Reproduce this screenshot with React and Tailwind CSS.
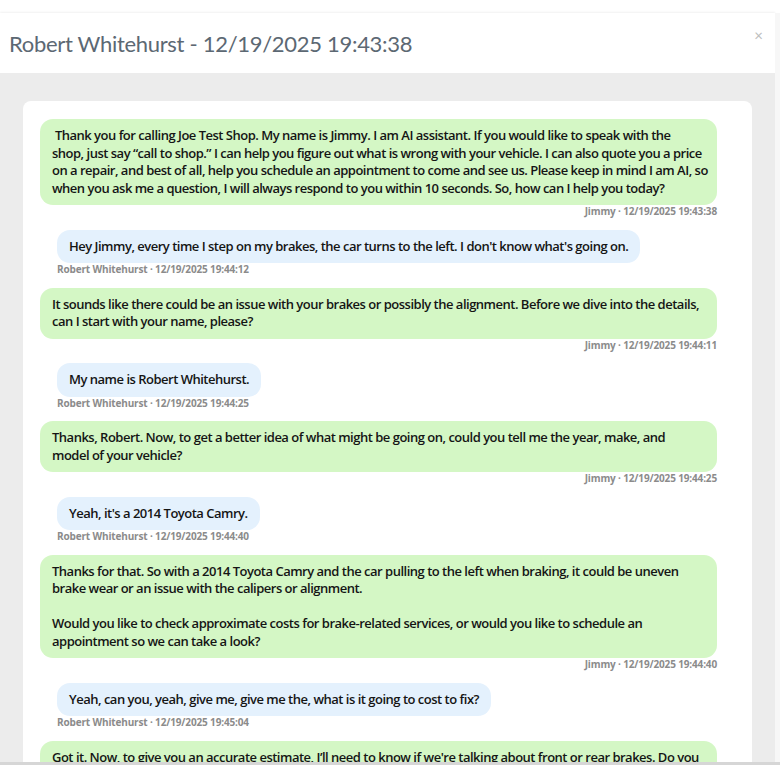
import React from 'react';

// line breaks kept as they appear in the transcript view
const MESSAGES = [
  { from: 'Jimmy', time: '12/19/2025 19:43:38', text: ' Thank you for calling Joe Test Shop. My name is Jimmy. I am AI assistant. If you would like to speak with the\nshop, just say \u201ccall to shop.\u201d I can help you figure out what is wrong with your vehicle. I can also quote you a price\non a repair, and best of all, help you schedule an appointment to come and see us. Please keep in mind I am AI, so\nwhen you ask me a question, I will always respond to you within 10 seconds. So, how can I help you today?' },
  { from: 'Robert Whitehurst', time: '12/19/2025 19:44:12', text: "Hey Jimmy, every time I step on my brakes, the car turns to the left. I don't know what's going on." },
  { from: 'Jimmy', time: '12/19/2025 19:44:11', text: 'It sounds like there could be an issue with your brakes or possibly the alignment. Before we dive into the details,\ncan I start with your name, please?' },
  { from: 'Robert Whitehurst', time: '12/19/2025 19:44:25', text: 'My name is Robert Whitehurst.' },
  { from: 'Jimmy', time: '12/19/2025 19:44:25', text: 'Thanks, Robert. Now, to get a better idea of what might be going on, could you tell me the year, make, and\nmodel of your vehicle?' },
  { from: 'Robert Whitehurst', time: '12/19/2025 19:44:40', text: "Yeah, it's a 2014 Toyota Camry." },
  { from: 'Jimmy', time: '12/19/2025 19:44:40', text: 'Thanks for that. So with a 2014 Toyota Camry and the car pulling to the left when braking, it could be uneven\nbrake wear or an issue with the calipers or alignment.\n\nWould you like to check approximate costs for brake-related services, or would you like to schedule an\nappointment so we can take a look?' },
  { from: 'Robert Whitehurst', time: '12/19/2025 19:45:04', text: 'Yeah, can you, yeah, give me, give me the, what is it going to cost to fix?' },
  { from: 'Jimmy', time: '12/19/2025 19:45:20', text: "Got it. Now, to give you an accurate estimate, I\u2019ll need to know if we're talking about front or rear brakes. Do you\nknow which ones are making the car pull, or should we check both?" },
];

function Message({ msg }) {
  const isBot = msg.from === 'Jimmy';
  return (
    <div className={isBot ? 'flex flex-col items-end' : 'flex flex-col items-start pl-[17px]'}>
      <div
        className={`rounded-[13px] py-2 whitespace-pre-wrap text-[13px] leading-[17.5px] font-semibold tracking-[-0.5px] text-[#151515] ${
          isBot ? 'bg-[#d4f7c5] w-full pl-3 pr-[4px]' : 'bg-[#e4f1fd] max-w-[600px] px-3'
        }`}
      >
        {msg.text}
      </div>
      <div className="text-[10px] leading-[13px] font-bold tracking-[-0.15px] text-[#8b8b8b]">
        {msg.from} · {msg.time}
      </div>
    </div>
  );
}

export default function App() {
  return (
    <div className="h-[765px] overflow-hidden flex flex-col bg-white" style={{ fontFamily: '"Open Sans", "Noto Sans", sans-serif' }}>
      <div className="h-[13px] shrink-0" />
      <div className="flex flex-1 min-h-0">
        {/* Modal */}
        <div className="w-[775px] flex flex-col shadow-[0_-1px_2px_rgba(0,0,0,0.06)]">
          <div className="h-[60px] shrink-0 bg-white flex items-center justify-between pl-[9px] pr-[12px]">
            <h2 className="text-[22px] text-[#5c6873] tracking-[-0.3px]" style={{ fontFamily: 'Lato, sans-serif' }}>
              Robert Whitehurst - 12/19/2025 19:43:38
            </h2>
            <span className="text-[15px] text-[#bdbdbd] -mt-[16px]" style={{ fontFamily: 'Lato, sans-serif' }}>×</span>
          </div>
          <div className="flex-1 min-h-0 bg-[#ececec] pt-[28px] pl-[23px] pr-[23px] overflow-hidden">
            <div className="bg-white rounded-t-[8px] h-full pt-[18px] pl-[17px] pr-[35px] flex flex-col gap-[11.5px]">
              {MESSAGES.map((m, i) => (
                <Message key={i} msg={m} />
              ))}
            </div>
          </div>
        </div>
        <div className="flex-1 bg-[#f7f7f7]" />
      </div>
      <div className="h-[3px] shrink-0 bg-[#d6d6d6]" />
    </div>
  );
}
